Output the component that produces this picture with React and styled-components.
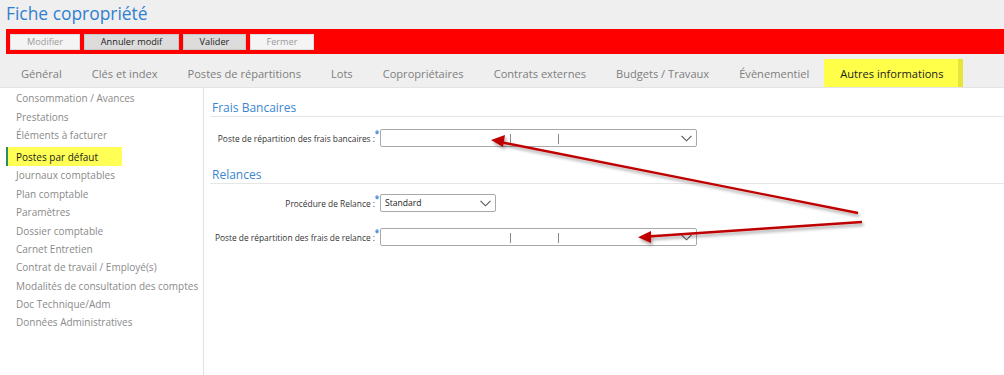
import React from "react";
import styled, { createGlobalStyle } from "styled-components";

const GlobalStyle = createGlobalStyle`
  html, body { margin: 0; padding: 0; background: #fff; }
  body { font-family: "Open Sans", "Noto Sans", sans-serif; }
  * { box-sizing: border-box; }
`;

const Page = styled.div`
  position: relative;
  width: 1004px;
  height: 375px;
  overflow: hidden;
  background: #fff;
`;

const Header = styled.header`
  background: #efefef;
  display: flex;
  flex-direction: column;
`;

const Title = styled.h1`
  margin: 0;
  height: 29px;
  padding: 2px 0 0 6px;
  font-size: 17.4px;
  font-weight: 400;
  color: #2f7fd1;
  line-height: 22px;
`;

const Toolbar = styled.div`
  margin-left: 6px;
  height: 25px;
  background: #ff0000;
  display: flex;
  align-items: center;
  gap: 4px;
  padding: 0 4px;
`;

const ToolButton = styled.button`
  width: ${(p) => p.$w}px;
  height: 16px;
  padding: 0;
  border: 1px solid ${(p) => (p.$enabled ? "#c8c8c8" : "#dedede")};
  background: ${(p) => (p.$enabled ? "#dcdcdc" : "#f4f4f4")};
  color: ${(p) => (p.$enabled ? "#222" : "#9a9a9a")};
  font-family: inherit;
  font-size: 9.2px;
  line-height: 14px;
  text-align: center;
`;

const Tabs = styled.nav`
  display: flex;
  height: 34px;
  padding: 5px 0 0 6px;
  align-items: stretch;
  border-bottom: 1px solid #e4e4e4;
`;

const Tab = styled.div`
  display: flex;
  align-items: center;
  padding: ${(p) => (p.$active ? "0 20px 0 16px" : "0 15px")};
  font-size: 11.1px;
  color: ${(p) => (p.$active ? "#222" : "#7e7e7e")};
  background: ${(p) => (p.$active ? "#ffff4a" : "transparent")};
  box-shadow: ${(p) => (p.$active ? "inset -5px 0 0 #e6e63a" : "none")};
  white-space: nowrap;
`;

const Body = styled.div`
  display: flex;
  height: 287px;
`;

const Sidebar = styled.ul`
  list-style: none;
  margin: 0;
  padding: 1px 0 0 0;
  width: 204px;
  border-right: 1px solid #e2e2e2;
`;

const SideItem = styled.li`
  height: ${(p) => (p.$active ? "19px" : "18.4px")};
  margin: ${(p) => (p.$active ? "3px 0 0 6px" : "0")};
  width: ${(p) => (p.$active ? "116px" : "auto")};
  padding-left: ${(p) => (p.$active ? "8px" : "16px")};
  display: flex;
  align-items: center;
  font-size: 10px;
  color: ${(p) => (p.$active ? "#222" : "#8a8a8a")};
  background: ${(p) => (p.$active ? "#ffff55" : "transparent")};
  border-left: ${(p) => (p.$active ? "2px solid #2b8a6a" : "none")};
  white-space: nowrap;
`;

const Main = styled.main`
  flex: 1;
  padding: 10px 0 0 6px;
  display: flex;
  flex-direction: column;
`;

const Section = styled.section`
  display: flex;
  flex-direction: column;
  margin-bottom: ${(p) => p.$mb || 0}px;
`;

const SectionTitle = styled.h2`
  margin: 0;
  padding: 3px 0 0 2px;
  height: 19px;
  font-size: 12px;
  font-weight: 400;
  color: #3a86d2;
  line-height: 14px;
  border-bottom: 1px solid #e6e6e6;
`;

const Row = styled.div`
  display: flex;
  align-items: center;
  margin-top: ${(p) => p.$mt}px;
  height: 18px;
`;

const Label = styled.label`
  width: 170px;
  text-align: right;
  font-size: 8.4px;
  color: #333;
  white-space: nowrap;
  position: relative;
  padding-right: 5px;
`;

const Req = styled.span`
  position: absolute;
  right: 1px;
  top: -5px;
  color: #3a86d2;
  font-size: 8px;
  font-weight: 700;
`;

const Combo = styled.div`
  width: ${(p) => p.$w}px;
  height: 18px;
  border: 1px solid #a9a9a9;
  border-radius: 2px;
  background: #fff;
  position: relative;
  display: flex;
  align-items: center;
  padding-left: 4px;
  font-size: 8.6px;
  color: #222;
`;

const Sep = styled.span`
  position: absolute;
  left: ${(p) => p.$x}px;
  top: 4px;
  width: 1px;
  height: 10px;
  background: #8a8a8a;
`;

const Chevron = styled.svg`
  position: absolute;
  right: 4px;
  top: 5px;
`;

const Overlay = styled.svg`
  position: absolute;
  left: 0;
  top: 0;
  pointer-events: none;
`;

const ChevronIcon = () => (
  <Chevron width="11" height="7" viewBox="0 0 11 7">
    <path d="M0.5 0.8 L5.5 5.8 L10.5 0.8" fill="none" stroke="#555" strokeWidth="1.1" />
  </Chevron>
);

const tabs = [
  "Général",
  "Clés et index",
  "Postes de répartitions",
  "Lots",
  "Copropriétaires",
  "Contrats externes",
  "Budgets / Travaux",
  "Évènementiel",
  "Autres informations",
];

const sideItems = [
  "Consommation / Avances",
  "Prestations",
  "Éléments à facturer",
  "Postes par défaut",
  "Journaux comptables",
  "Plan comptable",
  "Paramètres",
  "Dossier comptable",
  "Carnet Entretien",
  "Contrat de travail / Employé(s)",
  "Modalités de consultation des comptes",
  "Doc Technique/Adm",
  "Données Administratives",
];

export default function App() {
  return (
    <Page>
      <GlobalStyle />
      <Header>
        <Title>Fiche copropriété</Title>
        <Toolbar>
          <ToolButton $w={70}>Modifier</ToolButton>
          <ToolButton $w={95} $enabled>Annuler modif</ToolButton>
          <ToolButton $w={63} $enabled>Valider</ToolButton>
          <ToolButton $w={64}>Fermer</ToolButton>
        </Toolbar>
        <Tabs>
          {tabs.map((t) => (
            <Tab key={t} $active={t === "Autres informations"}>{t}</Tab>
          ))}
        </Tabs>
      </Header>
      <Body>
        <Sidebar>
          {sideItems.map((s) => (
            <SideItem key={s} $active={s === "Postes par défaut"}>{s}</SideItem>
          ))}
        </Sidebar>
        <Main>
          <Section $mb={18}>
            <SectionTitle>Frais Bancaires</SectionTitle>
            <Row $mt={12}>
              <Label>Poste de répartition des frais bancaires :<Req>*</Req></Label>
              <Combo $w={317}>
                <Sep $x={129} />
                <Sep $x={177} />
                <ChevronIcon />
              </Combo>
            </Row>
          </Section>
          <Section>
            <SectionTitle>Relances</SectionTitle>
            <Row $mt={10}>
              <Label>Procédure de Relance :<Req>*</Req></Label>
              <Combo $w={116}>
                Standard
                <ChevronIcon />
              </Combo>
            </Row>
            <Row $mt={16}>
              <Label>Poste de répartition des frais de relance :<Req>*</Req></Label>
              <Combo $w={317}>
                <Sep $x={129} />
                <Sep $x={177} />
                <ChevronIcon />
              </Combo>
            </Row>
          </Section>
        </Main>
      </Body>
      <Overlay width="1004" height="375" viewBox="0 0 1004 375">
        <defs>
          <filter id="sh" x="-10%" y="-50%" width="120%" height="200%">
            <feDropShadow dx="1.5" dy="2.5" stdDeviation="1.5" floodColor="#000" floodOpacity="0.35" />
          </filter>
        </defs>
        <g filter="url(#sh)" fill="#c00000" stroke="#c00000">
          <line x1="858" y1="213" x2="500" y2="142" strokeWidth="2.4" />
          <polygon points="491,140 505,135 503,147" stroke="none" />
          <line x1="862" y1="222" x2="648" y2="236.5" strokeWidth="2.4" />
          <polygon points="638,237.3 651,231 651,243" stroke="none" />
        </g>
      </Overlay>
    </Page>
  );
}
